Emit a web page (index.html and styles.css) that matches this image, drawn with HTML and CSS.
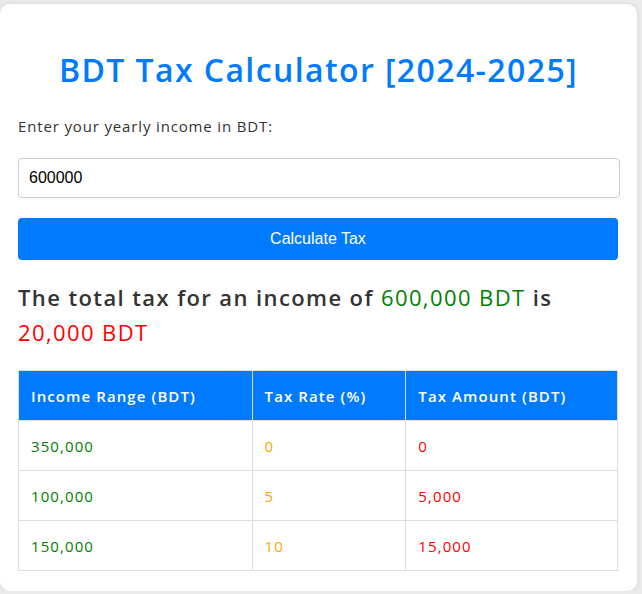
FILE: index.html
```html
<!DOCTYPE html>
<html lang="en">
<head>
<meta charset="utf-8">
<title>BDT Tax Calculator</title>
<link rel="stylesheet" href="styles.css">
</head>
<body>
<div class="card">
  <h1 class="title">BDT Tax Calculator [2024-2025]</h1>
  <label class="label" for="income">Enter your yearly income in BDT:</label>
  <input class="input" id="income" type="text" value="600000">
  <button class="btn" type="button">Calculate Tax</button>
  <h3 class="result">The total tax for an income of <span class="green">600,000 BDT</span> is <span class="red">20,000 BDT</span></h3>
  <table class="table">
    <thead>
      <tr><th class="c1">Income Range (BDT)</th><th class="c2">Tax Rate (%)</th><th class="c3">Tax Amount (BDT)</th></tr>
    </thead>
    <tbody>
      <tr><td class="green">350,000</td><td class="orange">0</td><td class="red">0</td></tr>
      <tr><td class="green">100,000</td><td class="orange">5</td><td class="red">5,000</td></tr>
      <tr><td class="green">150,000</td><td class="orange">10</td><td class="red">15,000</td></tr>
    </tbody>
  </table>
</div>
</body>
</html>
```
FILE: styles.css
```css
html, body { margin: 0; padding: 0; }
body {
  background: #ebebeb;
  font-family: "Open Sans", "Noto Sans", sans-serif;
  color: #333;
  padding-top: 4px;
}
.card {
  width: 637px;
  box-sizing: border-box;
  background: #fff;
  border-radius: 10px;
  padding: 20px 18px 20px 18px;
  box-shadow: 0 0 6px rgba(0,0,0,0.08);
}
.title {
  margin: 26px 0 24px;
  font-size: 32px;
  line-height: 40px;
  font-weight: 600;
  letter-spacing: 1.4px;
  color: #007bff;
  text-align: center;
}
.label {
  display: block;
  font-size: 15px;
  line-height: 24px;
  letter-spacing: 0.85px;
  color: #333;
}
.input {
  display: block;
  margin-top: 20px;
  width: 602px;
  height: 40px;
  box-sizing: border-box;
  border: 1px solid #ccc;
  border-radius: 4px;
  padding: 0 10px;
  font-family: "Liberation Sans", Arial, sans-serif;
  font-size: 16px;
  color: #000;
}
.btn {
  display: block;
  margin-top: 20px;
  width: 600px;
  height: 42px;
  border: none;
  border-radius: 4px;
  background: #007bff;
  color: #fff;
  font-family: "Liberation Sans", Arial, sans-serif;
  font-size: 16px;
}
.result {
  margin: 20px 0 20px;
  font-size: 22px;
  line-height: 35px;
  font-weight: 600;
  letter-spacing: 1.4px;
  color: #333;
}
.result .green, .result .red { font-weight: 400; }
.green { color: #008000; }
.red { color: #ff0000; }
.orange { color: #ffa500; }
.table {
  width: 600px;
  border-collapse: collapse;
  font-size: 15px;
  letter-spacing: 1.1px;
}
.table th, .table td {
  border: 1px solid #ddd;
  height: 50px;
  box-sizing: border-box;
  padding: 0 12px;
  text-align: left;
}
.table th {
  background: #007bff;
  color: #fff;
  font-weight: 600;
}
.c1 { width: 234px; }
.c2 { width: 154px; }
.c3 { width: 212px; }
```
